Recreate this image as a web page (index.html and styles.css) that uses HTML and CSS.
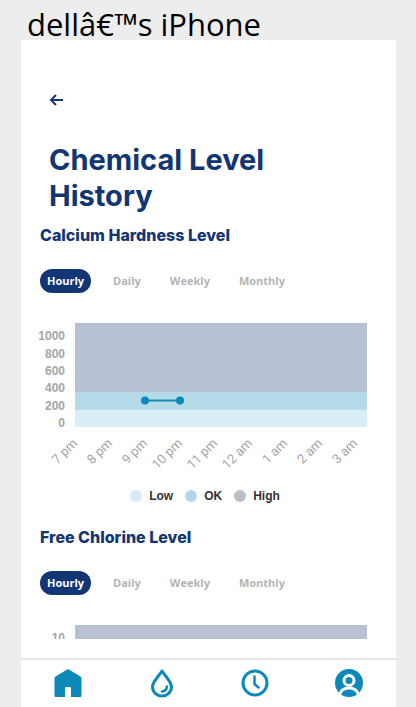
FILE: index.html
```html
<!DOCTYPE html>
<html lang="en">
<head>
<meta charset="utf-8">
<meta name="viewport" content="width=device-width, initial-scale=1">
<title>Chemical Level History</title>
<link rel="stylesheet" href="styles.css">
</head>
<body>
<header class="device-name">dellâ€™s iPhone</header>
<div class="phone">
  <main class="content">
    <button class="back" type="button" aria-label="Back">
      <svg width="14" height="14" viewBox="0 0 14 14"><path d="M14 7H2M7 2L2 7L7 12"/></svg>
    </button>
    <h1 class="title">Chemical Level History</h1>

    <section class="level">
      <h2 class="level-name">Calcium Hardness Level</h2>
      <div class="ranges">
        <button class="range active" type="button">Hourly</button>
        <button class="range" type="button">Daily</button>
        <button class="range" type="button">Weekly</button>
        <button class="range" type="button">Monthly</button>
      </div>
      <svg class="chart" viewBox="0 0 375 156">
        <rect class="high" x="54" y="4" width="292" height="69"/>
        <rect class="ok" x="54" y="73" width="292" height="18"/>
        <rect class="low" x="54" y="91" width="292" height="17"/>
        <path class="line" d="M124 81.500H159"/>
        <circle class="point" cx="124" cy="81.500" r="4"/>
        <circle class="point" cx="159" cy="81.500" r="4"/>
        <g class="y-axis">
          <text x="44" y="21">1000</text>
          <text x="44" y="39">800</text>
          <text x="44" y="56">600</text>
          <text x="44" y="73">400</text>
          <text x="44" y="91">200</text>
          <text x="44" y="108">0</text>
        </g>
        <g class="x-axis">
          <text transform="translate(57 125) rotate(-45)">7 pm</text>
          <text transform="translate(92 125) rotate(-45)">8 pm</text>
          <text transform="translate(127 125) rotate(-45)">9 pm</text>
          <text transform="translate(162 125) rotate(-45)">10 pm</text>
          <text transform="translate(197 125) rotate(-45)">11 pm</text>
          <text transform="translate(232 125) rotate(-45)">12 am</text>
          <text transform="translate(267 125) rotate(-45)">1 am</text>
          <text transform="translate(302 125) rotate(-45)">2 am</text>
          <text transform="translate(337 125) rotate(-45)">3 am</text>
        </g>
      </svg>
      <ul class="legend">
        <li><span class="dot dot-low"></span>Low</li>
        <li><span class="dot dot-ok"></span>OK</li>
        <li><span class="dot dot-high"></span>High</li>
      </ul>
    </section>

    <section class="level">
      <h2 class="level-name">Free Chlorine Level</h2>
      <div class="ranges">
        <button class="range active" type="button">Hourly</button>
        <button class="range" type="button">Daily</button>
        <button class="range" type="button">Weekly</button>
        <button class="range" type="button">Monthly</button>
      </div>
      <svg class="chart" viewBox="0 0 375 156">
        <rect class="high" x="54" y="4" width="292" height="69"/>
        <g class="y-axis"><text x="44" y="21">10</text></g>
      </svg>
    </section>
  </main>

  <nav class="tabs">
    <a href="#home" aria-label="Home">
      <svg width="30" height="30" viewBox="0 0 30 30"><path class="fill" d="M15 1L27.500 8.500Q28.500 9.200 28.500 10.500V27.500Q28.500 29 27 29H18V20Q18 19 17 19H13Q12 19 12 20V29H3Q1.500 29 1.500 27.500V10.500Q1.500 9.200 2.500 8.500Z"/></svg>
    </a>
    <a href="#water" aria-label="Water">
      <svg width="30" height="30" viewBox="0 0 30 30"><path class="stroke" d="M15 3C12 8 5.500 13.500 5.500 19A9.500 9 0 0 0 24.500 19C24.500 13.500 18 8 15 3Z"/><path class="stroke thin" d="M20 18.500Q19.500 22.800 15 23.500"/></svg>
    </a>
    <a href="#history" aria-label="History">
      <svg width="30" height="30" viewBox="0 0 30 30"><circle class="stroke" cx="15" cy="15" r="12"/><path class="stroke thin" d="M14.500 8.500V16L18.500 19.500"/></svg>
    </a>
    <a href="#account" aria-label="Account">
      <svg width="30" height="30" viewBox="0 0 30 30"><circle class="fill" cx="15" cy="15" r="14"/><circle class="cut" cx="15" cy="12.500" r="5"/><path class="cut" d="M6 25.500C8.500 18 21.500 18 24 25.500"/></svg>
    </a>
  </nav>
</div>
</body>
</html>
```
FILE: styles.css
```css
* { box-sizing: border-box; }

body {
  display: flex;
  flex-direction: column;
  height: 100vh;
  margin: 0;
  padding: 0 20px 0 21px;
  overflow: hidden;
  background: #ededed;
  font-family: Inter, "Liberation Sans", sans-serif;
}

.device-name {
  height: 40px;
  padding: 4px 6px 0;
  color: #000;
  font: 400 31px/40px "Open Sans", "Noto Sans", sans-serif;
  white-space: nowrap;
}

.phone {
  display: flex;
  flex: 1;
  flex-direction: column;
  min-height: 0;
  background: #fff;
}

.content {
  flex: 1;
  min-height: 0;
  margin-bottom: 19px;
  overflow: hidden;
}

button {
  border: 0;
  background: none;
  cursor: pointer;
}

.back {
  display: block;
  margin: 53px 0 0 28px;
  padding: 0;
}

.back svg {
  display: block;
  fill: none;
  stroke: #153a75;
  stroke-width: 2;
}

.title {
  max-width: 280px;
  margin: 35px 28px 0;
  color: #123673;
  font-size: 29px;
  font-weight: 700;
  line-height: 36px;
}

.level { margin-bottom: 11px; }

.level-name {
  margin: 0 19px;
  padding-top: 9px;
  color: #123673;
  font-size: 16px;
  font-weight: 800;
  line-height: 24px;
}

.ranges {
  display: flex;
  gap: 15px;
  margin: 22px 19px 26px;
}

.range {
  height: 24px;
  padding: 0 7px;
  border-radius: 12px;
  color: #b4b4b6;
  font: 700 11px/24px "Open Sans", sans-serif;
}

.range.active {
  background: #123674;
  color: #fff;
}

.chart {
  display: block;
  width: 100%;
}

.high { fill: #b8c0d4; }
.ok { fill: #b5dbe9; }
.low { fill: #d8eff7; }
.line { stroke: #1489b6; stroke-width: 2; }
.point { fill: #0d89b9; }

.y-axis {
  fill: #a5a5a8;
  font: 700 12px "Liberation Sans", sans-serif;
  text-anchor: end;
}

.x-axis {
  fill: #a5a5a8;
  font: 400 13px Roboto, sans-serif;
  text-anchor: end;
}

.legend {
  display: flex;
  justify-content: center;
  gap: 12px;
  margin: 12px 0 0;
  padding: 0 7px 0 0;
  color: #303033;
  font: 700 12px/18px "Liberation Sans", sans-serif;
  list-style: none;
}

.legend li {
  display: flex;
  align-items: center;
  gap: 7px;
}

.dot {
  width: 12px;
  height: 12px;
  border-radius: 50%;
}

.dot-low { background: #d8ebf5; }
.dot-ok { background: #b2d9ea; }
.dot-high { background: #bebec6; }

.tabs {
  display: flex;
  border-top: 2px solid #e6e6e6;
}

.tabs a {
  display: flex;
  flex: 1;
  justify-content: center;
  padding: 8px 0 9px;
}

.tabs svg { display: block; }

.fill { fill: #0c89b9; }

.stroke,
.cut {
  fill: none;
  stroke: #0c89b9;
  stroke-width: 3;
  stroke-linecap: round;
  stroke-linejoin: round;
}

.thin { stroke-width: 2.5; }

.cut { stroke: #fff; }
```
